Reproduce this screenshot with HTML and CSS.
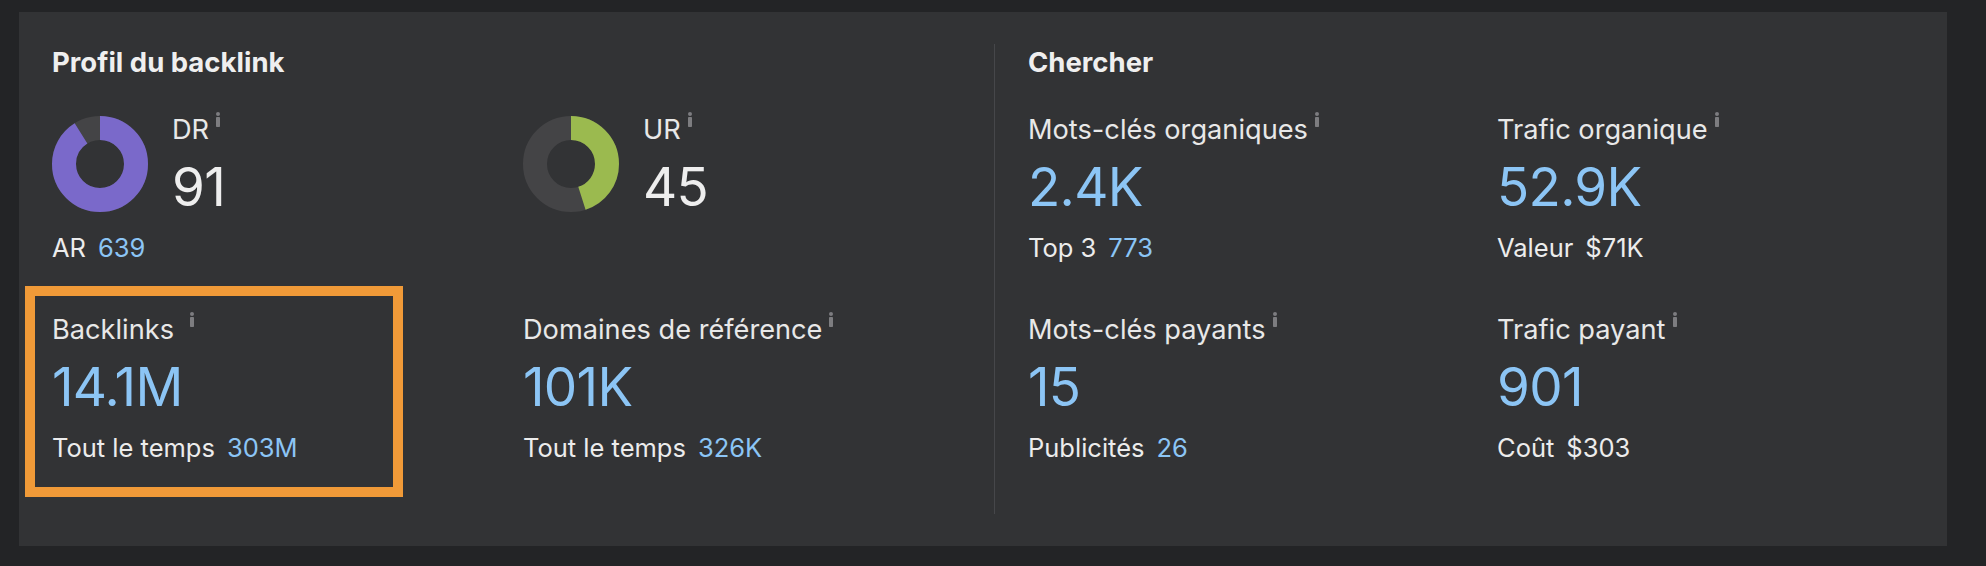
FILE: index.html
```html
<!DOCTYPE html>
<html lang="fr">
<head>
<meta charset="utf-8">
<title>Profil du backlink</title>
<link rel="stylesheet" href="styles.css">
</head>
<body>
<div class="panel">
  <section class="section section-left">
    <h2 class="title">Profil du backlink</h2>
    <div class="grid grid-left">
      <div class="cell">
        <div class="gauge">
          <svg class="donut" viewBox="0 0 96 96" width="96" height="96">
            <circle cx="48" cy="48" r="36" fill="none" stroke="#444446" stroke-width="24"/>
            <circle cx="48" cy="48" r="36" fill="none" stroke="#7a69ca" stroke-width="24" stroke-dasharray="205.84 226.19" transform="rotate(-90 48 48)"/>
          </svg>
          <div class="gauge-text">
            <div class="label">DR<svg class="info" viewBox="0 0 4 15" width="4" height="15"><rect x="0" y="0" width="4" height="4" rx="2"/><rect x="0" y="5" width="4" height="10" rx="0.8"/></svg></div>
            <div class="number">91</div>
          </div>
        </div>
        <div class="sub"><span>AR</span><span class="blue">639</span></div>
      </div>
      <div class="cell">
        <div class="gauge">
          <svg class="donut" viewBox="0 0 96 96" width="96" height="96">
            <circle cx="48" cy="48" r="36" fill="none" stroke="#444446" stroke-width="24"/>
            <circle cx="48" cy="48" r="36" fill="none" stroke="#9bba4f" stroke-width="24" stroke-dasharray="101.79 226.19" transform="rotate(-90 48 48)"/>
          </svg>
          <div class="gauge-text">
            <div class="label">UR<svg class="info" viewBox="0 0 4 15" width="4" height="15"><rect x="0" y="0" width="4" height="4" rx="2"/><rect x="0" y="5" width="4" height="10" rx="0.8"/></svg></div>
            <div class="number">45</div>
          </div>
        </div>
      </div>
      <div class="cell cell-highlight">
        <div class="label label-wide">Backlinks<svg class="info" viewBox="0 0 4 15" width="4" height="15"><rect x="0" y="0" width="4" height="4" rx="2"/><rect x="0" y="5" width="4" height="10" rx="0.8"/></svg></div>
        <div class="number blue">14.1M</div>
        <div class="sub"><span>Tout le temps</span><span class="blue">303M</span></div>
      </div>
      <div class="cell">
        <div class="label">Domaines de référence<svg class="info" viewBox="0 0 4 15" width="4" height="15"><rect x="0" y="0" width="4" height="4" rx="2"/><rect x="0" y="5" width="4" height="10" rx="0.8"/></svg></div>
        <div class="number blue">101K</div>
        <div class="sub"><span>Tout le temps</span><span class="blue">326K</span></div>
      </div>
    </div>
  </section>
  <section class="section section-right">
    <h2 class="title">Chercher</h2>
    <div class="grid grid-right">
      <div class="cell">
        <div class="label">Mots-clés organiques<svg class="info" viewBox="0 0 4 15" width="4" height="15"><rect x="0" y="0" width="4" height="4" rx="2"/><rect x="0" y="5" width="4" height="10" rx="0.8"/></svg></div>
        <div class="number blue">2.4K</div>
        <div class="sub"><span>Top 3</span><span class="blue">773</span></div>
      </div>
      <div class="cell">
        <div class="label">Trafic organique<svg class="info" viewBox="0 0 4 15" width="4" height="15"><rect x="0" y="0" width="4" height="4" rx="2"/><rect x="0" y="5" width="4" height="10" rx="0.8"/></svg></div>
        <div class="number blue">52.9K</div>
        <div class="sub"><span>Valeur</span><span>$71K</span></div>
      </div>
      <div class="cell">
        <div class="label">Mots-clés payants<svg class="info" viewBox="0 0 4 15" width="4" height="15"><rect x="0" y="0" width="4" height="4" rx="2"/><rect x="0" y="5" width="4" height="10" rx="0.8"/></svg></div>
        <div class="number blue">15</div>
        <div class="sub"><span>Publicités</span><span class="blue">26</span></div>
      </div>
      <div class="cell">
        <div class="label">Trafic payant<svg class="info" viewBox="0 0 4 15" width="4" height="15"><rect x="0" y="0" width="4" height="4" rx="2"/><rect x="0" y="5" width="4" height="10" rx="0.8"/></svg></div>
        <div class="number blue">901</div>
        <div class="sub"><span>Coût</span><span>$303</span></div>
      </div>
    </div>
  </section>
</div>
</body>
</html>
```

FILE: styles.css
```css
html, body {
  margin: 0;
  padding: 0;
  background: #232426;
}

body {
  font-family: Inter, "Noto Sans", "Liberation Sans", sans-serif;
  color: #ececec;
  padding: 12px 39px 20px 19px;
}

.panel {
  display: flex;
  background: #323335;
  padding: 32px 0 32px 33px;
}

.section {
  display: flex;
  flex-direction: column;
  height: 470px;
  box-sizing: border-box;
}

.section-left {
  width: 942px;
}

.section-right {
  flex: 1;
  border-left: 1px solid #46474a;
  padding-left: 33px;
}

.title {
  margin: 0 0 34px;
  font-size: 27.5px;
  line-height: 36px;
  font-weight: 700;
  color: #efefef;
}

.grid {
  display: grid;
  grid-auto-rows: 150px;
  row-gap: 50px;
}

.grid-left {
  grid-template-columns: 471px 471px;
}

.grid-right {
  grid-template-columns: 469px 1fr;
}

.cell {
  display: flex;
  flex-direction: column;
  align-items: flex-start;
}

.cell-highlight {
  position: relative;
}

.cell-highlight::before {
  content: "";
  position: absolute;
  left: -27px;
  top: -28px;
  width: 378px;
  height: 211px;
  box-sizing: border-box;
  border: 10px solid #f09a38;
  pointer-events: none;
}

.gauge {
  display: flex;
  align-items: flex-start;
  gap: 24px;
}

.donut {
  display: block;
  margin-top: 2px;
  flex: none;
}

.gauge-text {
  display: flex;
  flex-direction: column;
}

.label {
  display: flex;
  align-items: flex-start;
  gap: 7px;
  font-size: 27.2px;
  line-height: 32px;
  color: #e8e8e8;
  margin-bottom: 9px;
  white-space: nowrap;
}

.label-wide {
  gap: 16px;
}

.info {
  display: block;
  fill: #7d7d80;
  margin-top: -2px;
  flex: none;
}

.number {
  font-size: 53px;
  line-height: 64px;
  color: #eeeeee;
  margin-bottom: 13px;
  letter-spacing: -0.7px;
}

.sub {
  display: flex;
  gap: 12px;
  font-size: 25.5px;
  line-height: 32px;
  color: #ececec;
  white-space: nowrap;
}

.blue {
  color: #8cc5f5;
}
```
